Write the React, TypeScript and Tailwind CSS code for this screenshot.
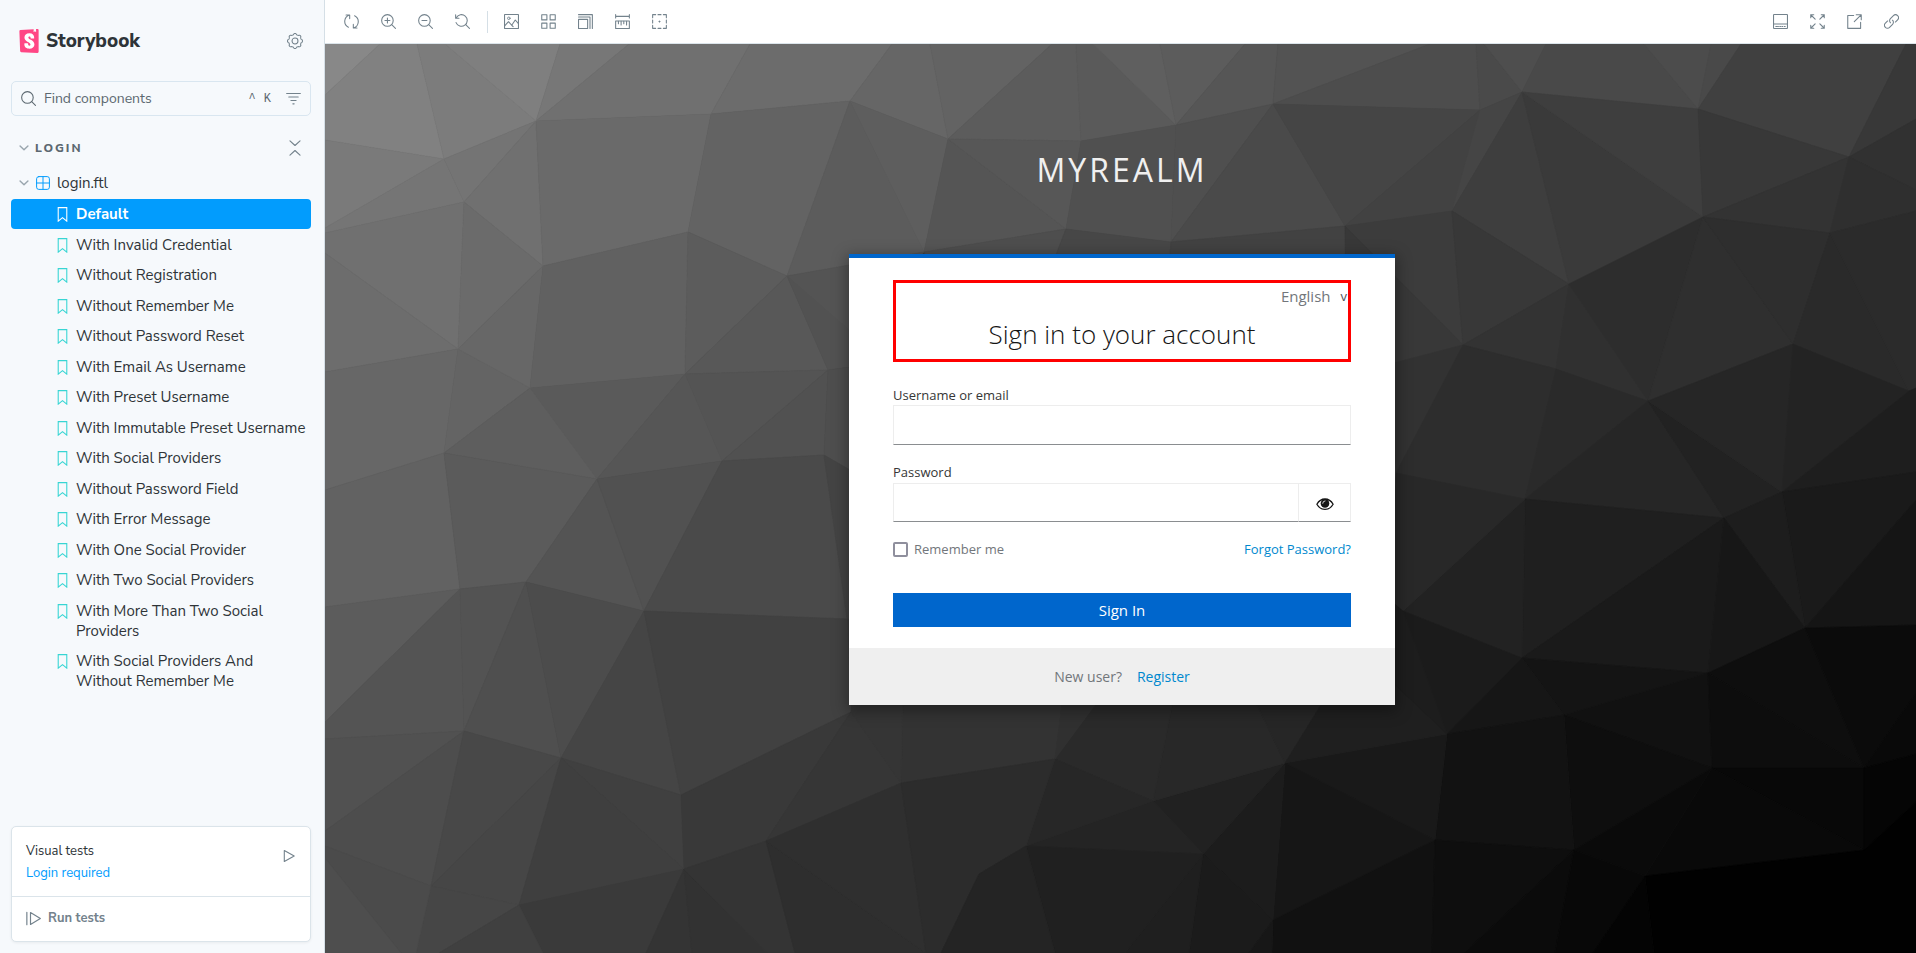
import type { ReactNode } from "react";
import { SiStorybook } from "react-icons/si";

/* ---------- icons, drawn on a 14-unit grid ---------- */

function Icon({ children, className = "size-[15px]" }: { children: ReactNode; className?: string }) {
  return (
    <svg
      viewBox="0 0 14 14"
      fill="none"
      stroke="currentColor"
      strokeLinecap="round"
      strokeLinejoin="round"
      className={`shrink-0 ${className}`}
      aria-hidden="true"
    >
      {children}
    </svg>
  );
}

const gearOutline = (() => {
  const steps = 96;
  const points: string[] = [];
  for (let i = 0; i < steps; i++) {
    const t = (i / steps) * Math.PI * 2;
    const r = 6.05 + 0.5 * Math.tanh(2.2 * Math.cos(8 * t));
    points.push(`${(7 + r * Math.cos(t)).toFixed(2)} ${(7 + r * Math.sin(t)).toFixed(2)}`);
  }
  return `M${points.join("L")}Z`;
})();

const icons = {
  sync: (
    <>
      <path d="M5.2 .9A6.2 6.2 0 0 0 4.1 12.4M1.9 .9h3.4v3.4" />
      <path d="M8.8 13.1A6.2 6.2 0 0 0 9.9 1.6M12.1 13.1H8.7V9.7" />
    </>
  ),
  zoomIn: (
    <>
      <circle cx="6" cy="6" r="5.4" />
      <path d="M10 10l3.5 3.5M6 3.7v4.6M3.7 6h4.6" />
    </>
  ),
  zoomOut: (
    <>
      <circle cx="6" cy="6" r="5.4" />
      <path d="M10 10l3.5 3.5M3.7 6h4.6" />
    </>
  ),
  zoomReset: (
    <>
      <path d="M1.2 3.6A5.4 5.4 0 1 1 1 8M.6 .8v3.1h3.1" />
      <path d="M10 10l3.5 3.5" />
    </>
  ),
  photo: (
    <>
      <rect x=".5" y=".5" width="13" height="13" rx=".3" />
      <circle cx="4.5" cy="4" r="1.2" strokeWidth=".8" />
      <path d="M.8 10.8l3.4-3.6 3 3.3 3.3-4.9 3 3.4M7.2 10.5l1.3 1.3" />
    </>
  ),
  grid: (
    <>
      <rect x=".7" y=".7" width="4.8" height="4.8" />
      <rect x="8.5" y=".7" width="4.8" height="4.8" />
      <rect x=".7" y="8.5" width="4.8" height="4.8" />
      <rect x="8.5" y="8.5" width="4.8" height="4.8" />
    </>
  ),
  grow: (
    <>
      <rect x=".5" y="5" width="8.5" height="8.5" />
      <path d="M.5 2.8h10.7v10.7M.5 .6h12.9v12.9" />
    </>
  ),
  ruler: (
    <>
      <path d="M.6 2.2h12.8M.6 .6v3.2M13.4 .6v3.2" />
      <rect x=".6" y="6.6" width="12.8" height="6.9" />
      <path d="M3.2 6.8v2.2M5.7 6.8v3.4M8.2 6.8v2.2M10.8 6.8v3.4" />
    </>
  ),
  outline: (
    <>
      <path d="M3.4 .6H.6v2.8M10.6 .6h2.8v2.8M3.4 13.4H.6v-2.8M10.6 13.4h2.8v-2.8M5.6 .6h2.8M5.6 13.4h2.8M.6 5.6v2.8M13.4 5.6v2.8" />
      <path d="M7 6.5v1M6.5 7h1" />
    </>
  ),
  bottomBar: (
    <>
      <rect x=".5" y=".5" width="13" height="13" rx=".5" />
      <path d="M.5 9.4h13M2.6 11.6h1.6M5.2 11.6h.6M6.9 11.6h.6M8.6 11.6h.6M10.6 11.6h.8" />
    </>
  ),
  expand: (
    <path d="M.7 3.5V.7h2.8M.7 .7l4.1 4.1M10.5 .7h2.8v2.8M13.3 .7L9.2 4.8M.7 10.5v2.8h2.8M.7 13.3l4.1-4.1M13.3 10.5v2.8h-2.8M13.3 13.3L9.2 9.2" />
  ),
  share: (
    <path d="M6.2 1.4H.7v12h12V7.8M8.6 .7h4.7v4.7M13.2 .8L6.8 7.2" />
  ),
  link: (
    <>
      <path d="M6.1 8.2a2.7 2.7 0 0 1-.1-3.9L8.8 1.5a2.75 2.75 0 0 1 3.9 3.9L10.6 7.5" />
      <path d="M7.9 5.8a2.7 2.7 0 0 1 .1 3.9l-2.8 2.8a2.75 2.75 0 0 1-3.9-3.9L3.4 6.5" />
    </>
  ),
  gear: (
    <>
      <path d={gearOutline} strokeWidth=".9" />
      <circle cx="7" cy="7" r="2.6" strokeWidth=".9" />
    </>
  ),
  search: (
    <>
      <circle cx="6" cy="6" r="5.4" />
      <path d="M10 10l3.5 3.5" />
    </>
  ),
  filter: <path d="M.6 2.4h12.8M2.6 5.6h8.8M4.6 8.8h4.8M6.4 12h1.2" />,
  chevron: <path d="M1.500 4.200L7 9.600 12.500 4.200" strokeWidth="2" />,
  collapse: <path d="M2.600 .8L7 4.800 11.400 .8M2.600 13.200L7 9.200l4.400 4" />,
  component: (
    <>
      <rect x=".6" y=".6" width="12.8" height="12.8" rx="2.2" />
      <path d="M7 .6v12.8M.6 7h12.8" />
    </>
  ),
  bookmark: <path d="M3 .6h8v12.6L7 9.9l-4 3.3z" strokeLinejoin="miter" />,
  play: <path d="M2.3 1.6v10.8L12.2 7z" strokeWidth="1.1" />,
  playAll: <path d="M.8 1.2v11.6M4.2 1.4v11.2L13.4 7z" strokeWidth="1.1" />,
};

type IconName = keyof typeof icons;

/* ---------- faceted backdrop ---------- */

type Facet = [shade: number, points: string];

const facets: Facet[] = [
  [136, "325,44 380,44 325,95"],
  [129, "380,44 417,44 444,159 325,140 325,95"],
  [124, "417,44 445,44 536,121 444,159"],
  [127, "445,44 560,44 536,121"],
  [119, "560,44 629,44 536,121"],
  [112, "629,44 750,44 711,114 536,121"],
  [108, "750,44 892,44 850,101 711,114"],
  [102, "892,44 930,44 948,139 850,101"],
  [99, "930,44 1052,44 948,139"],
  [92, "1052,44 1076,44 1081,141 948,139"],
  [90, "1076,44 1093,44 1176,125 1081,141"],
  [95, "1093,44 1160,44 1176,125"],
  [92, "1160,44 1245,44 1176,125"],
  [86, "1245,44 1278,44 1273,104 1176,125"],
  [83, "1278,44 1430,44 1273,104"],
  [77, "1430,44 1476,44 1480,110 1273,104"],
  [74, "1476,44 1484,44 1522,92 1480,110"],
  [78, "1484,44 1546,44 1522,92"],
  [73, "1546,44 1644,44 1698,109 1522,92"],
  [76, "1644,44 1711,44 1698,109"],
  [73, "1711,44 1741,44 1698,109"],
  [64, "1741,44 1906,44 1849,157 1698,109"],
  [56, "1906,44 1916,44 1916,119 1849,157"],
  [122, "325,140 444,159 325,228"],
  [117, "444,159 464,202 325,233 325,228"],
  [116, "536,121 444,159 464,202"],
  [112, "536,121 464,202 543,266"],
  [112, "325,233 464,202 458,349 325,253"],
  [109, "325,253 458,349 325,372"],
  [107, "464,202 543,266 458,349"],
  [106, "536,121 711,114 688,232 543,266"],
  [99, "711,114 850,101 787,276 688,232"],
  [92, "850,101 924,252 787,276"],
  [94, "850,101 948,139 924,252"],
  [85, "948,139 1066,229 924,252"],
  [87, "948,139 1081,141 1066,229"],
  [80, "1081,141 1176,125 1171,242 1066,229"],
  [79, "1176,125 1273,104 1171,242"],
  [74, "1273,104 1345,226 1171,242"],
  [69, "1273,104 1480,110 1345,226"],
  [66, "1480,110 1452,211 1345,226"],
  [69, "1480,110 1522,92 1452,211"],
  [62, "1522,92 1569,284 1452,211"],
  [58, "1522,92 1703,217 1569,284"],
  [62, "1522,92 1698,109 1703,217"],
  [56, "1698,109 1849,157 1703,217"],
  [51, "1849,157 1830,233 1703,217"],
  [49, "1849,157 1916,119 1916,190"],
  [47, "1849,157 1916,190 1916,211 1830,233"],
  [84, "787,276 924,252 849,350"],
  [78, "924,252 1066,229 1000,400"],
  [71, "1066,229 1171,242 1160,400 1000,400"],
  [66, "1171,242 1345,226 1346,400 1160,400"],
  [60, "1345,226 1452,211 1463,345"],
  [56, "1345,226 1463,345 1393,363 1346,300"],
  [56, "1452,211 1569,284 1463,345"],
  [51, "1569,284 1463,345 1556,369"],
  [48, "1569,284 1556,369 1648,401"],
  [45, "1569,284 1703,217 1648,401"],
  [47, "1703,217 1793,344 1648,401"],
  [46, "1703,217 1830,233 1793,344"],
  [42, "1830,233 1793,344 1909,391"],
  [43, "1830,233 1916,211 1916,390 1909,391"],
  [50, "1463,345 1390,364 1396,473"],
  [45, "1463,345 1556,369 1525,499 1396,473"],
  [42, "1556,369 1648,401 1525,499"],
  [38, "1648,401 1525,499 1724,518"],
  [34, "1648,401 1724,518 1782,492"],
  [38, "1648,401 1793,344 1782,492"],
  [35, "1793,344 1909,391 1782,492"],
  [30, "1909,391 1916,388 1916,472 1782,492"],
  [26, "1782,492 1916,472 1916,500 1805,628"],
  [21, "1916,500 1916,625 1805,628"],
  [29, "1782,492 1805,628 1724,518"],
  [31, "1525,499 1724,518 1522,658"],
  [34, "1525,499 1522,658 1403,611"],
  [40, "1396,473 1525,499 1403,611 1390,611"],
  [26, "1724,518 1708,673 1522,658"],
  [23, "1724,518 1805,628 1708,673"],
  [20, "1708,673 1522,658 1564,715"],
  [27, "1403,611 1522,658 1447,734"],
  [22, "1522,658 1564,715 1447,734"],
  [14, "1805,628 1708,673 1864,768"],
  [11, "1805,628 1916,625 1916,693 1864,768"],
  [17, "1708,673 1564,715 1712,768"],
  [13, "1708,673 1712,768 1864,768"],
  [9, "1864,768 1916,693 1916,754"],
  [8, "1712,768 1864,768 1864,850"],
  [9, "1712,768 1864,850 1645,876"],
  [5, "1864,768 1916,754 1916,802 1864,850"],
  [1, "1864,850 1916,802 1916,953 1654,953 1645,876"],
  [14, "1564,715 1712,768 1574,850"],
  [10, "1712,768 1574,850 1645,876"],
  [18, "1564,715 1447,734 1435,840 1574,850"],
  [25, "1447,734 1285,763 1435,840"],
  [22, "1285,763 1273,920 1435,840"],
  [17, "1435,840 1273,920 1272,953 1432,953"],
  [14, "1435,840 1574,850 1464,953 1432,953"],
  [11, "1574,850 1464,953 1555,953"],
  [8, "1574,850 1645,876 1593,953 1555,953"],
  [4, "1645,876 1593,953 1654,953"],
  [28, "1203,854 1273,920 1285,763"],
  [33, "1153,801 1285,763 1203,854"],
  [27, "1203,854 1273,920 1249,953 1189,953"],
  [23, "1273,920 1272,953 1249,953"],
  [31, "1203,854 1189,953 1125,953"],
  [36, "1153,801 1203,854 1026,846"],
  [32, "1026,846 1203,854 1125,953 1055,953"],
  [40, "1153,801 1175,690 1250,690 1285,763"],
  [38, "1250,690 1330,690 1285,763"],
  [31, "1330,690 1403,611 1447,734 1285,763"],
  [29, "1390,600 1403,611 1447,734 1390,680"],
  [42, "1055,759 1106,690 1175,690 1153,801"],
  [39, "1055,759 1153,801 1026,846"],
  [51, "901,783 903,690 1064,690 1055,759"],
  [48, "1064,690 1106,690 1055,759"],
  [103, "325,372 458,349 444,453 325,490"],
  [100, "458,349 530,388 444,453"],
  [103, "543,266 458,349 530,388"],
  [97, "543,266 688,232 685,374 530,388"],
  [92, "688,232 787,276 685,374"],
  [88, "787,276 828,370 685,374"],
  [82, "787,276 849,330 849,367 828,370"],
  [84, "685,374 828,370 722,461"],
  [90, "685,374 530,388 597,479"],
  [86, "685,374 722,461 597,479"],
  [94, "530,388 444,453 597,479"],
  [81, "828,370 722,461 824,455"],
  [78, "828,370 850,367 850,470 824,455"],
  [98, "325,490 444,453 460,589 325,607"],
  [91, "444,453 597,479 526,582 460,589"],
  [84, "597,479 526,582 644,611"],
  [81, "597,479 722,461 644,611"],
  [74, "722,461 824,455 847,619 644,611"],
  [68, "824,455 850,470 850,619 847,619"],
  [92, "325,607 460,589 325,722"],
  [84, "460,589 464,731 325,739 325,722"],
  [83, "460,589 526,582 464,731"],
  [79, "526,582 464,731 561,758"],
  [76, "526,582 561,758 644,611"],
  [69, "644,611 561,758 681,795"],
  [65, "644,611 847,619 851,712 681,795"],
  [81, "325,739 464,731 325,831"],
  [77, "464,731 325,831 325,846 431,886"],
  [72, "464,731 561,758 431,886"],
  [70, "561,758 431,886 519,905"],
  [64, "561,758 681,795 684,869"],
  [63, "561,758 684,869 519,905"],
  [57, "681,795 851,712 766,841 684,869"],
  [54, "851,712 766,841 901,783"],
  [53, "851,712 851,690 903,690 901,783"],
  [58, "684,869 519,905 543,953 646,953"],
  [52, "684,869 646,953 692,953"],
  [50, "684,869 692,953 767,953"],
  [52, "684,869 766,841 795,953 767,953"],
  [46, "766,841 926,953 795,953"],
  [47, "766,841 901,783 926,953"],
  [44, "901,783 1055,759 1026,846 979,874 941,953 926,953"],
  [36, "1026,846 979,874 941,953 1055,953"],
  [70, "431,886 519,905 439,953 416,953"],
  [64, "519,905 439,953 543,953"],
  [75, "325,846 431,886 416,953 401,953 325,858"],
  [78, "325,858 401,953 325,953"],
];

function Backdrop() {
  return (
    <svg
      viewBox="325 44 1591 909"
      preserveAspectRatio="xMidYMid slice"
      className="absolute inset-0 size-full"
      aria-hidden="true"
    >
      <rect x="325" y="44" width="1591" height="909" fill="#3c3c3c" />
      {facets.map(([shade, points]) => {
        const tone = `rgb(${shade},${shade},${shade})`;
        return <polygon key={points} points={points} fill={tone} stroke={tone} strokeWidth="0.6" />;
      })}
    </svg>
  );
}

/* ---------- sidebar ---------- */

const stories = [
  "Default",
  "With Invalid Credential",
  "Without Registration",
  "Without Remember Me",
  "Without Password Reset",
  "With Email As Username",
  "With Preset Username",
  "With Immutable Preset Username",
  "With Social Providers",
  "Without Password Field",
  "With Error Message",
  "With One Social Provider",
  "With Two Social Providers",
  "With More Than Two Social Providers",
  "With Social Providers And Without Remember Me",
];

function StoryRow({ name, selected }: { name: string; selected: boolean }) {
  const tone = selected
    ? "rounded-[4px] bg-[#029cfd] font-bold text-white"
    : "text-[#2e3438]";
  return (
    <li className="even:pt-px">
      <a
        href="#story"
        className={`flex gap-[6px] py-[5px] pl-[44px] text-[15px] leading-5 ${tone}`}
        aria-current={selected ? "page" : undefined}
      >
        <span className={`flex h-5 items-center ${selected ? "text-white" : "text-[#37d5d3]"}`}>
          <Icon>{icons.bookmark}</Icon>
        </span>
        <span>{name}</span>
      </a>
    </li>
  );
}

function Sidebar() {
  return (
    <aside className="flex w-[325px] shrink-0 flex-col border-r border-[#d5dfe6] bg-[#f6f9fc] pr-[13px] pl-[11px] font-['Nunito_Sans',Lato,sans-serif] text-[#2e3438]">
      <header className="flex items-center justify-between pt-[26px] pr-2 pl-[6px]">
        <a href="#home" className="flex items-center gap-[5px] text-[19px] leading-[30px] font-extrabold">
          <span className="bg-[linear-gradient(white,white)] bg-[length:12px_18px] bg-center bg-no-repeat text-[#ff4785]">
            <SiStorybook className="size-6" aria-hidden="true" />
          </span>
          Storybook
        </a>
        <button type="button" aria-label="Settings" className="text-[#73828c]">
          <Icon className="size-4">{icons.gear}</Icon>
        </button>
      </header>

      <div className="mt-[25px] flex h-[35px] items-center rounded-[5px] border border-[#d9e6f0] px-[9px] text-[#5c6870]">
        <Icon>{icons.search}</Icon>
        <input
          type="search"
          aria-label="Find components"
          placeholder="Find components"
          className="ml-2 min-w-0 flex-1 bg-transparent text-[14px] outline-none placeholder:text-[#5c6870]"
        />
        <kbd className="flex gap-2 font-['Liberation_Mono',monospace] text-[12px] leading-4">
          <span>^</span>
          <span>K</span>
        </kbd>
        <button type="button" aria-label="Filter" className="ml-[15px] text-[#73828c]">
          <Icon>{icons.filter}</Icon>
        </button>
      </div>

      <div className="mt-[22px] flex h-5 items-center justify-between px-2">
        <button type="button" className="flex items-center gap-[6px] text-[12px] font-extrabold tracking-[2px] text-[#5c6870]">
          <Icon className="size-[10px] text-[#9aa6ae]">{icons.chevron}</Icon>
          LOGIN
        </button>
        <button type="button" aria-label="Collapse all" className="text-[#73828c]">
          <Icon className="size-4">{icons.collapse}</Icon>
        </button>
      </div>

      <button type="button" className="mt-[10px] flex h-[31px] items-center pb-px pl-2 text-left text-[15px] leading-5">
        <Icon className="size-[10px] text-[#9aa6ae]">{icons.chevron}</Icon>
        <Icon className="ml-[7px] size-[14px] text-[#029cfd]">{icons.component}</Icon>
        <span className="ml-[7px]">login.ftl</span>
      </button>
      <ul>
        {stories.map((name, i) => (
          <StoryRow key={name} name={name} selected={i === 0} />
        ))}
      </ul>

      <section className="mt-auto mb-[11px] rounded-[5px] border border-[#dbe4ea] bg-white text-[13px] shadow-[0_1px_3px_rgba(0,0,0,0.06)]">
        <div className="flex items-center justify-between border-b border-[#dbe4ea] px-[14px] pt-[13px] pb-3">
          <div className="leading-[22px]">
            <p>Visual tests</p>
            <a href="#login" className="text-[#029cfd]">Login required</a>
          </div>
          <button type="button" aria-label="Run visual tests" className="pb-3 text-[#73828c]">
            <Icon className="size-[14px]">{icons.play}</Icon>
          </button>
        </div>
        <button type="button" className="flex h-11 items-center gap-[7px] pb-px pl-[14px] font-bold text-[#73828c]">
          <Icon>{icons.playAll}</Icon>
          Run tests
        </button>
      </section>
    </aside>
  );
}

/* ---------- toolbar ---------- */

function Tool({ icon, label }: { icon: IconName; label: string }) {
  return (
    <button type="button" aria-label={label} className="flex size-[31px] items-center justify-center">
      <Icon>{icons[icon]}</Icon>
    </button>
  );
}

function Toolbar() {
  return (
    <div className="flex h-11 shrink-0 items-center justify-between border-b border-[#dbe4ea] bg-white px-[11px] text-[#73828c]">
      <div className="flex items-center gap-[6px]">
        <Tool icon="sync" label="Remount component" />
        <Tool icon="zoomIn" label="Zoom in" />
        <Tool icon="zoomOut" label="Zoom out" />
        <Tool icon="zoomReset" label="Reset zoom" />
        <span className="mr-[2px] ml-[3px] h-[22px] w-px bg-[#d5dfe6]" />
        <Tool icon="photo" label="Change background" />
        <Tool icon="grid" label="Apply grid" />
        <Tool icon="grow" label="Change viewport" />
        <Tool icon="ruler" label="Enable measure" />
        <Tool icon="outline" label="Apply outlines" />
      </div>
      <div className="-mr-[2px] flex items-center gap-[6px]">
        <Tool icon="bottomBar" label="Show addons" />
        <Tool icon="expand" label="Go full screen" />
        <Tool icon="share" label="Open in new tab" />
        <Tool icon="link" label="Copy link" />
      </div>
    </div>
  );
}

/* ---------- login page ---------- */

function EyeIcon() {
  return (
    <svg viewBox="0 0 18 14" className="h-[14px] w-[18px]" aria-hidden="true">
      <path d="M.9 7.2C2.8 3.9 5.6 2 9 2s6.2 1.9 8.100 5.200C15.200 10.500 12.400 12.400 9 12.400S2.800 10.500 .9 7.200z" fill="none" stroke="#151515" strokeWidth="1.3" />
      <circle cx="9" cy="6.4" r="4.3" fill="#151515" />
      <path d="M6.7 6.3A2.4 2.4 0 0 1 9 3.9" fill="none" stroke="#fff" strokeWidth=".8" strokeLinecap="round" />
    </svg>
  );
}

const field = "border border-[#ededed] border-b-[#8a8d90] bg-white px-2 text-[16px] outline-none";

function LoginCard() {
  return (
    <main className="w-full max-w-[546px] border-t-4 border-[#0066cc] bg-white text-[#363636] shadow-[0_4px_14px_2px_rgba(3,3,3,0.35)]">
      <div className="px-11 pt-[22px] pb-[21px]">
        <header className="border-[3px] border-[red] pb-[7px]">
          <div className="flex justify-end pt-px pr-px">
            <button type="button" className="flex items-center gap-[10px] text-[15px] leading-6 text-[#72767b]">
              English
              <span className="text-[13px] text-[#4d5258]">v</span>
            </button>
          </div>
          <h1 className="pt-2 text-center text-[26px] leading-[36px] font-light text-[#151515]">Sign in to your account</h1>
        </header>

        <form className="mt-[23px]" onSubmit={(e) => e.preventDefault()}>
          <label htmlFor="username" className="block text-[13px] leading-5">Username or email</label>
          <input id="username" type="text" className={`block h-10 w-full ${field}`} />

          <label htmlFor="password" className="mt-[17px] block text-[13px] leading-5">Password</label>
          <div className="mt-px flex h-[39px]">
            <input id="password" type="password" className={`min-w-0 flex-1 border-r-0 ${field}`} />
            <button
              type="button"
              aria-label="Show password"
              className="flex w-[53px] items-center justify-center border border-[#ededed] border-b-[#8a8d90] pt-[2px]"
            >
              <EyeIcon />
            </button>
          </div>

          <div className="mt-[17px] flex items-center justify-between text-[13px] leading-5">
            <label className="flex items-center gap-[6px] text-[#72767b]">
              <input
                type="checkbox"
                className="size-[15px] appearance-none rounded-[2px] border-2 border-[#8f8f9d] bg-white"
              />
              Remember me
            </label>
            <a href="#forgot" className="text-[#0088ce]">Forgot Password?</a>
          </div>

          <button type="submit" className="mt-[34px] block h-[34px] w-full bg-[#0066cc] text-[15px] text-white">
            Sign In
          </button>
        </form>
      </div>
      <footer className="flex h-[57px] items-center justify-center gap-[15px] bg-[#efefef] text-[14px] text-[#72767b]">
        <span>New user?</span>
        <a href="#register" className="text-[#0088ce]">Register</a>
      </footer>
    </main>
  );
}

export default function App() {
  return (
    <div className="flex min-h-screen">
      <Sidebar />
      <div className="flex min-w-0 flex-1 flex-col">
        <Toolbar />
        <div className="relative flex-1 overflow-hidden font-['Open_Sans',sans-serif]">
          <Backdrop />
          <div className="relative flex flex-col items-center pt-[102px] pr-4 pl-[19px]">
            <p className="text-[32px] leading-[48px] tracking-[3px] text-[#f0f0f0]">MYREALM</p>
            <div className="flex w-full justify-center pt-[60px]">
              <LoginCard />
            </div>
          </div>
        </div>
      </div>
    </div>
  );
}
